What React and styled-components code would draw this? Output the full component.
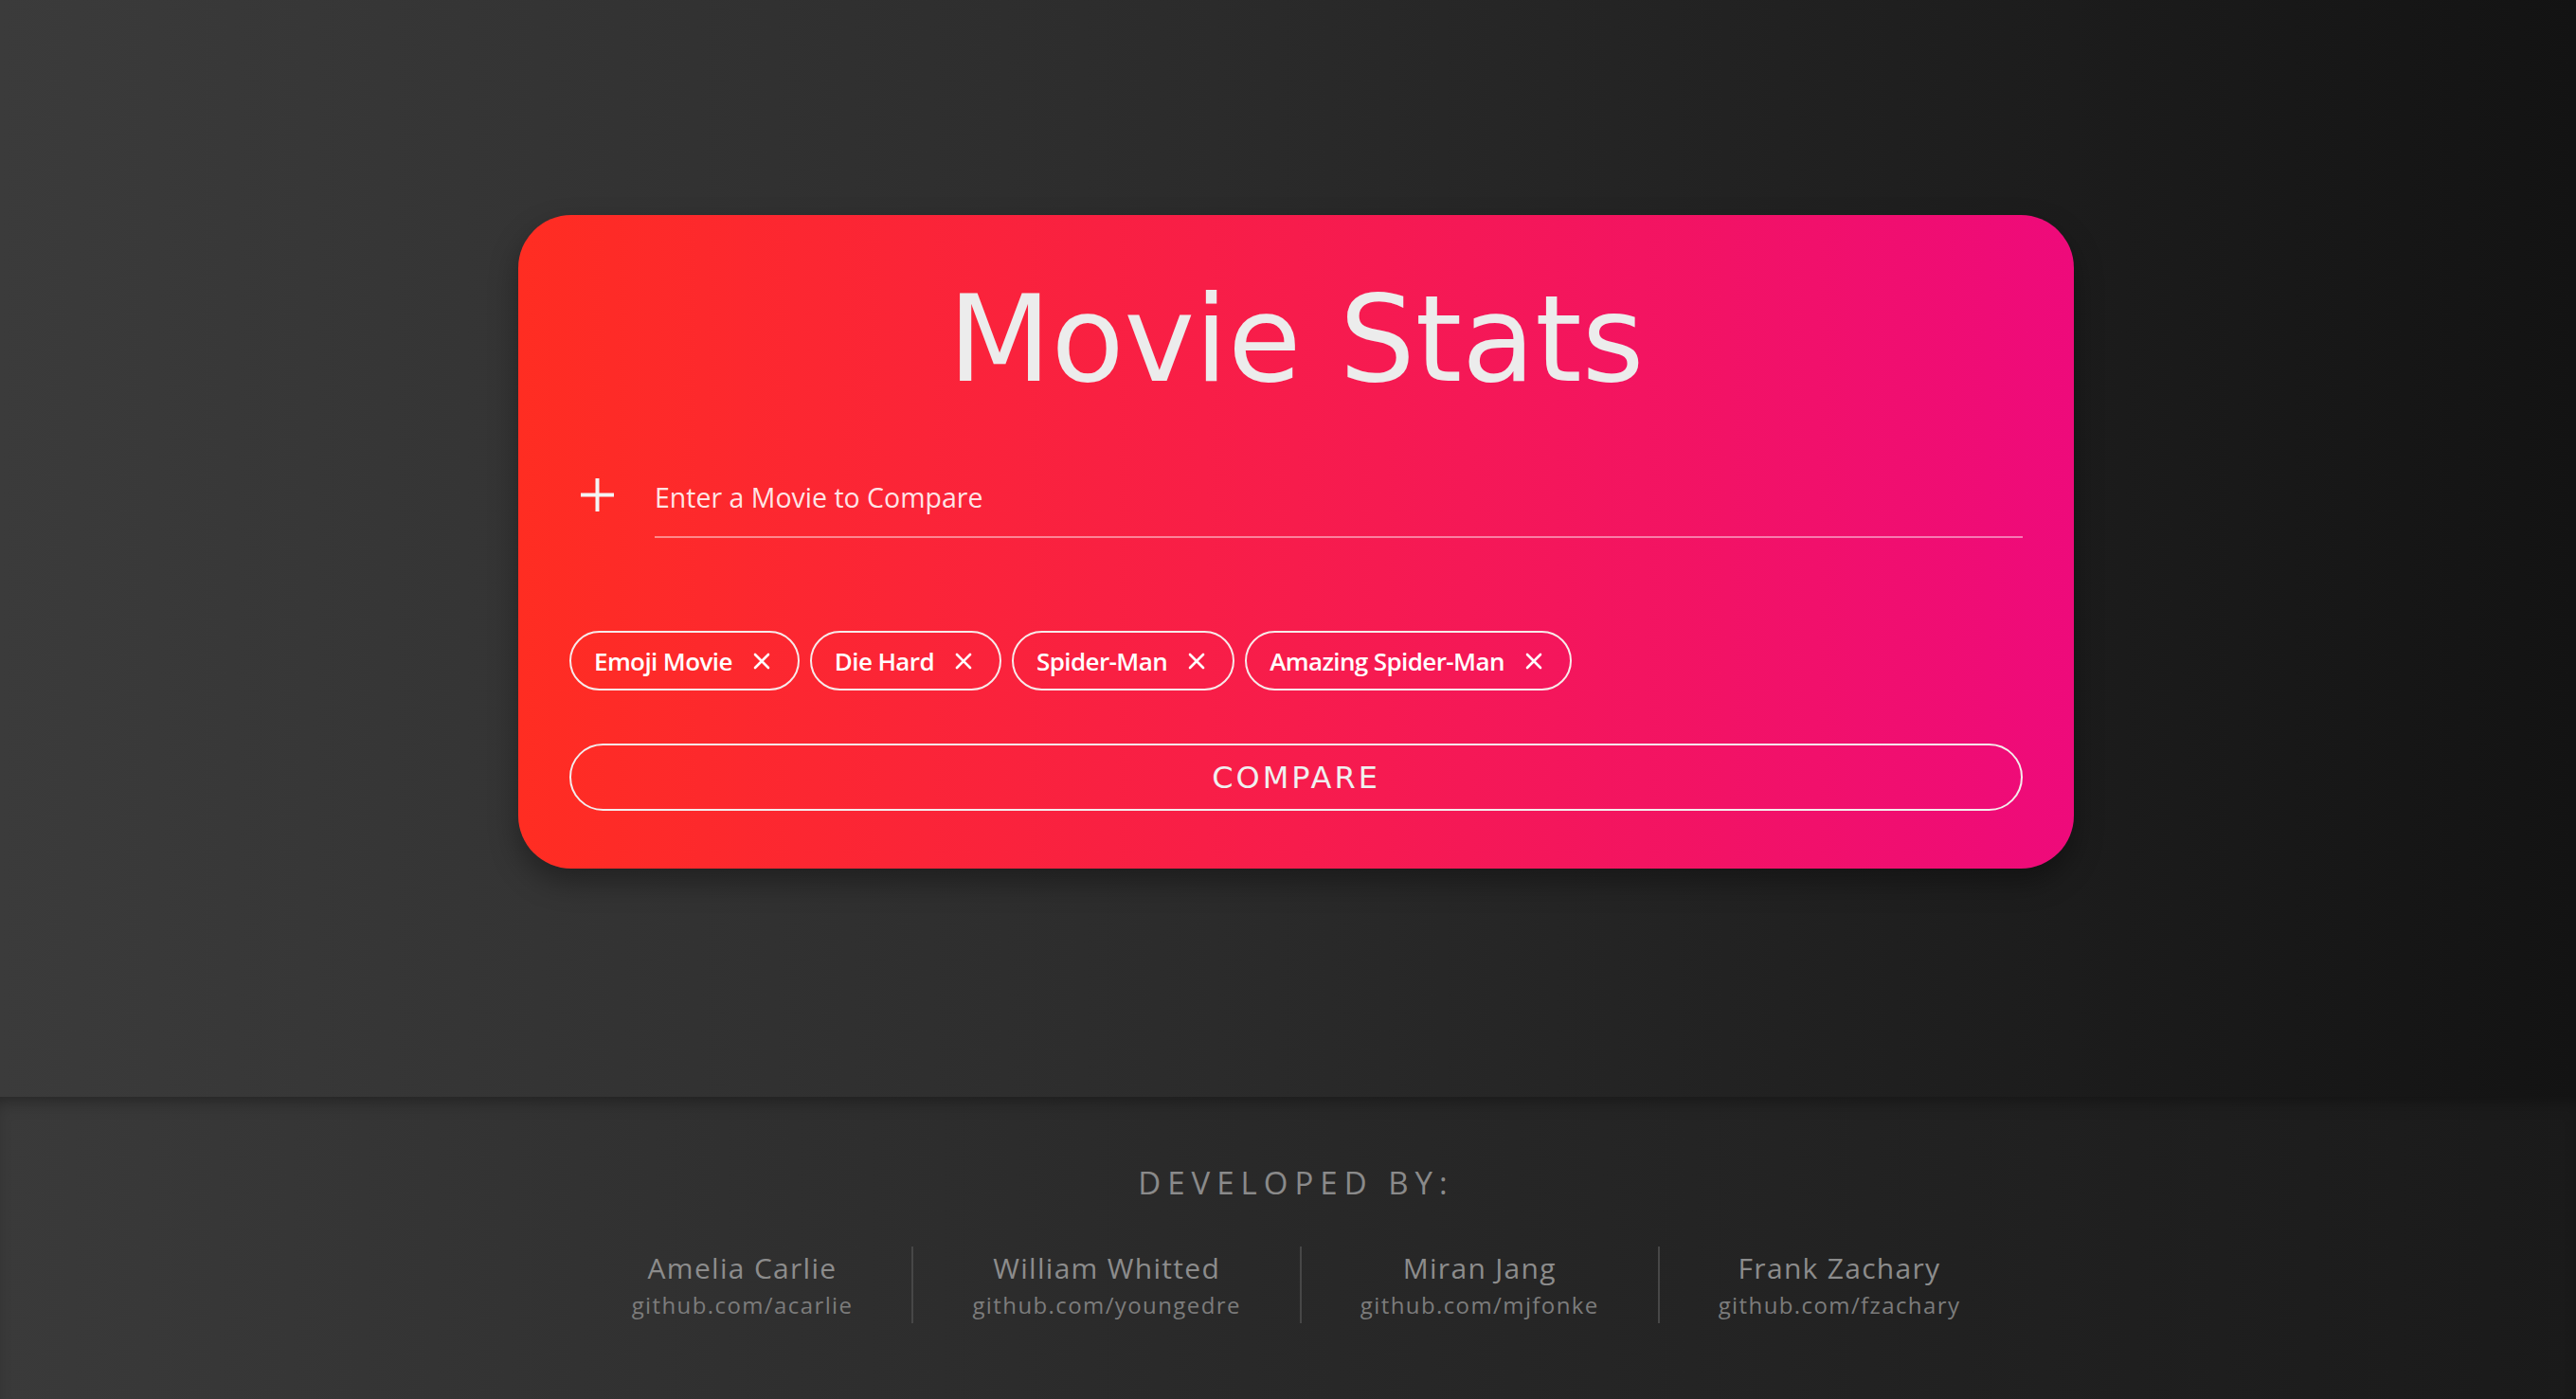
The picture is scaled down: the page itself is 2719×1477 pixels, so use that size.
import React, { useState } from 'react';
import styled, { createGlobalStyle } from 'styled-components';

const GlobalStyle = createGlobalStyle`
  html, body {
    margin: 0;
    padding: 0;
  }
  body {
    background: linear-gradient(90deg, #3b3b3b 0%, #2c2c2c 45%, #131313 100%);
    font-family: "Open Sans", "Noto Sans", sans-serif;
    min-height: 100vh;
  }
`;

const Page = styled.div`
  min-height: 100vh;
  display: flex;
  flex-direction: column;
`;

const Main = styled.main`
  display: flex;
  justify-content: center;
  padding: 227px 0 241px 17px;
`;

const Card = styled.section`
  width: 1642px;
  box-sizing: border-box;
  padding: 0 54px 61px;
  border-radius: 56px;
  background: linear-gradient(90deg, #ff2d22 0%, #f71c4c 50%, #ee0a7b 100%);
  box-shadow: 0 14px 30px rgba(0, 0, 0, 0.35);
  display: flex;
  flex-direction: column;
`;

const Title = styled.h1`
  margin: 56px 0 0;
  text-align: center;
  font-family: "DejaVu Sans", "Noto Sans", sans-serif;
  font-weight: 400;
  font-size: 126px;
  line-height: 1.2;
  letter-spacing: 0;
  color: #ececec;
`;

const InputRow = styled.div`
  display: flex;
  align-items: center;
  gap: 42px;
  margin: 64px 0 0 11px;
`;

const PlusIcon = styled.svg`
  width: 37px;
  height: 37px;
  flex: none;
  margin-bottom: 22px;
`;

const MovieInput = styled.input`
  flex: 1;
  background: transparent;
  border: none;
  border-bottom: 2px solid rgba(255, 255, 255, 0.45);
  outline: none;
  padding: 8px 0 22px;
  font-family: "Open Sans", sans-serif;
  font-size: 28.5px;
  color: #fff;
  &::placeholder {
    color: rgba(255, 255, 255, 0.9);
  }
`;

const ChipList = styled.div`
  display: flex;
  gap: 11px;
  margin-top: 98px;
`;

const Chip = styled.div`
  height: 63px;
  box-sizing: border-box;
  display: flex;
  align-items: center;
  gap: 22px;
  padding: 0 29px 0 24px;
  border: 2px solid #f8eaea;
  border-radius: 32px;
  font-family: "Open Sans", sans-serif;
  font-weight: 600;
  font-size: 26px;
  letter-spacing: -0.6px;
  color: #fff;
`;

const RemoveButton = styled.button`
  display: flex;
  padding: 0;
  border: none;
  background: none;
  cursor: pointer;
`;

const CompareButton = styled.button`
  margin-top: 56px;
  height: 71px;
  width: 100%;
  border: 2px solid #f4ecec;
  border-radius: 36px;
  background: transparent;
  font-family: "DejaVu Sans", "Noto Sans", sans-serif;
  font-size: 32px;
  letter-spacing: 3px;
  color: #f0f0f0;
  cursor: pointer;
`;

const Footer = styled.footer`
  flex: 1;
  background: linear-gradient(90deg, #3a3a3a 0%, #2a2a2a 45%, #1a1a1a 100%);
  box-shadow: inset 0 12px 18px -8px rgba(0, 0, 0, 0.35);
  padding: 68px 0 60px 17px;
  display: flex;
  flex-direction: column;
  align-items: center;
`;

const FooterTitle = styled.h2`
  margin: 0;
  font-family: "Open Sans", sans-serif;
  font-weight: 400;
  font-size: 33px;
  letter-spacing: 7px;
  color: #8a8a8a;
`;

const DevList = styled.div`
  display: flex;
  margin-top: 45px;
`;

const Dev = styled.div`
  display: flex;
  flex-direction: column;
  align-items: center;
  padding: 0 62px;
  height: 81px;
  justify-content: center;
  & + & {
    border-left: 2px solid #474747;
  }
`;

const DevName = styled.span`
  font-family: "Open Sans", sans-serif;
  font-size: 30px;
  letter-spacing: 1.3px;
  color: #8c8c8c;
  line-height: 1.25;
`;

const DevLink = styled.span`
  margin-top: 4px;
  font-family: "Open Sans", sans-serif;
  font-size: 24px;
  letter-spacing: 1.4px;
  color: #7c7c7c;
  line-height: 1.3;
`;

const initialMovies = ['Emoji Movie', 'Die Hard', 'Spider-Man', 'Amazing Spider-Man'];

const developers = [
  { name: 'Amelia Carlie', link: 'github.com/acarlie' },
  { name: 'William Whitted', link: 'github.com/youngedre' },
  { name: 'Miran Jang', link: 'github.com/mjfonke' },
  { name: 'Frank Zachary', link: 'github.com/fzachary' },
];

function Cross() {
  return (
    <svg width="18" height="18" viewBox="0 0 18 18">
      <path d="M2 2 L16 16 M16 2 L2 16" stroke="#fff" strokeWidth="2.6" strokeLinecap="round" />
    </svg>
  );
}

export default function App() {
  const [movies, setMovies] = useState(initialMovies);
  const [query, setQuery] = useState('');

  const removeMovie = (title) => setMovies(prev => prev.filter(m => m !== title));

  return (
    <Page>
      <GlobalStyle />
      <Main>
        <Card>
          <Title>Movie Stats</Title>
          <InputRow>
            <PlusIcon viewBox="0 0 37 37">
              <path d="M18.5 1 V36 M1 18.5 H36" stroke="#f4f4f4" strokeWidth="4" />
            </PlusIcon>
            <MovieInput
              value={query}
              onChange={e => setQuery(e.target.value)}
              placeholder="Enter a Movie to Compare"
            />
          </InputRow>
          <ChipList>
            {movies.map(title => (
              <Chip key={title}>
                {title}
                <RemoveButton onClick={() => removeMovie(title)} aria-label={`Remove ${title}`}>
                  <Cross />
                </RemoveButton>
              </Chip>
            ))}
          </ChipList>
          <CompareButton>COMPARE</CompareButton>
        </Card>
      </Main>
      <Footer>
        <FooterTitle>DEVELOPED BY:</FooterTitle>
        <DevList>
          {developers.map(dev => (
            <Dev key={dev.name}>
              <DevName>{dev.name}</DevName>
              <DevLink>{dev.link}</DevLink>
            </Dev>
          ))}
        </DevList>
      </Footer>
    </Page>
  );
}
